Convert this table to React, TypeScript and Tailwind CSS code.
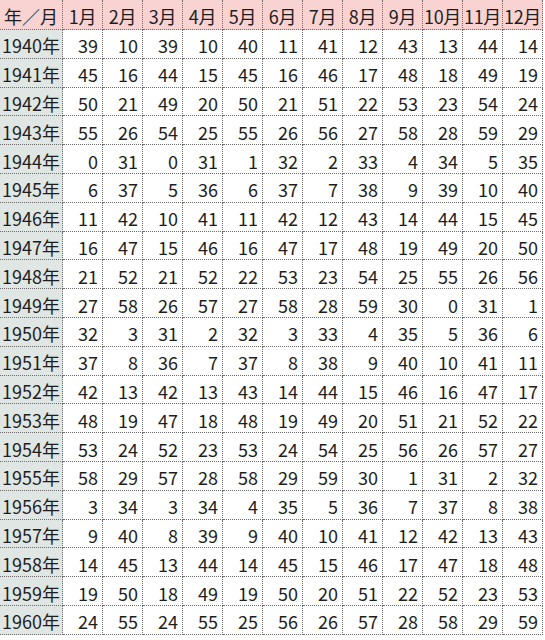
import React from "react";

const data: number[][] = [
  [39, 10, 39, 10, 40, 11, 41, 12, 43, 13, 44, 14],
  [45, 16, 44, 15, 45, 16, 46, 17, 48, 18, 49, 19],
  [50, 21, 49, 20, 50, 21, 51, 22, 53, 23, 54, 24],
  [55, 26, 54, 25, 55, 26, 56, 27, 58, 28, 59, 29],
  [0, 31, 0, 31, 1, 32, 2, 33, 4, 34, 5, 35],
  [6, 37, 5, 36, 6, 37, 7, 38, 9, 39, 10, 40],
  [11, 42, 10, 41, 11, 42, 12, 43, 14, 44, 15, 45],
  [16, 47, 15, 46, 16, 47, 17, 48, 19, 49, 20, 50],
  [21, 52, 21, 52, 22, 53, 23, 54, 25, 55, 26, 56],
  [27, 58, 26, 57, 27, 58, 28, 59, 30, 0, 31, 1],
  [32, 3, 31, 2, 32, 3, 33, 4, 35, 5, 36, 6],
  [37, 8, 36, 7, 37, 8, 38, 9, 40, 10, 41, 11],
  [42, 13, 42, 13, 43, 14, 44, 15, 46, 16, 47, 17],
  [48, 19, 47, 18, 48, 19, 49, 20, 51, 21, 52, 22],
  [53, 24, 52, 23, 53, 24, 54, 25, 56, 26, 57, 27],
  [58, 29, 57, 28, 58, 29, 59, 30, 1, 31, 2, 32],
  [3, 34, 3, 34, 4, 35, 5, 36, 7, 37, 8, 38],
  [9, 40, 8, 39, 9, 40, 10, 41, 12, 42, 13, 43],
  [14, 45, 13, 44, 14, 45, 15, 46, 17, 47, 18, 48],
  [19, 50, 18, 49, 19, 50, 20, 51, 22, 52, 23, 53],
  [24, 55, 24, 55, 25, 56, 26, 57, 28, 58, 29, 59],
];

const months = Array.from({ length: 12 }, (_, i) => `${i + 1}月`);

export default function App() {
  return (
    <div
      className="w-[545px] h-[640px] bg-white text-[#1e1e1e] text-[18px] leading-none overflow-hidden"
      style={{ fontFamily: '"Noto Sans CJK JP", "Noto Sans", sans-serif' }}
    >
      <div className="grid grid-cols-[63px_repeat(12,40px)] grid-rows-[30px_repeat(21,28.8px)]">
        <div className="bg-[#f9d2d2] border-r border-b border-dotted border-[#6b6b6b] flex items-center justify-center pt-[3px] whitespace-nowrap">
          年／月
        </div>
        {months.map((m) => (
          <div
            key={m}
            className="bg-[#f9d2d2] border-r border-b border-dotted border-[#6b6b6b] flex items-center justify-center pt-[3px] whitespace-nowrap tracking-[-0.3px]"
          >
            {m}
          </div>
        ))}
        {data.map((row, r) => (
          <React.Fragment key={r}>
            <div className="bg-[#dfe6e4] border-r border-b border-dotted border-[#6b6b6b] flex items-center justify-center pt-[3px] whitespace-nowrap">
              {1940 + r}年
            </div>
            {row.map((v, c) => (
              <div
                key={c}
                className="border-r border-b border-dotted border-[#6b6b6b] flex items-center justify-end pr-[4px] pt-[3px]"
              >
                {v}
              </div>
            ))}
          </React.Fragment>
        ))}
      </div>
    </div>
  );
}
